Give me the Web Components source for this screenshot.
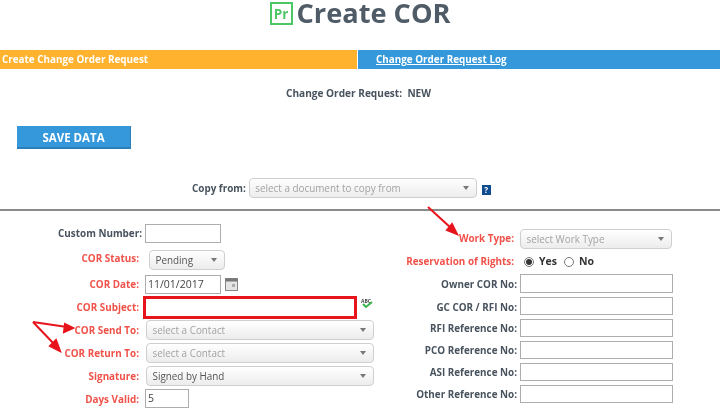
<!DOCTYPE html>
<html>
<head>
<meta charset="utf-8">
<title>Create COR</title>
<style>
  html, body { margin: 0; padding: 0; background: #fff; }
  body { width: 720px; height: 413px; overflow: hidden; position: relative; font-family: 'Open Sans', sans-serif; }
</style>
</head>
<body>
<cor-page></cor-page>

<script>
class CorTitle extends HTMLElement {
  constructor () {
    super()
    this.attachShadow({ mode: 'open' }).innerHTML = /* html */`
      <style>
      :host { display: flex; justify-content: center; align-items: flex-start; height: 50px; gap: 4px; color: #4f5b66; }
      .logo { width: 19px; height: 19px; margin-top: 2px; border: 2px solid #4cc764; color: #4cc764; font: 700 13.5px 'Open Sans', sans-serif; display: flex; align-items: center; justify-content: center; background: #fff; }
      h1 { margin: -1px 0 0; font: 700 27.2px/28px 'Open Sans', sans-serif; }
      </style>
      <span class="logo">Pr</span>
      <h1><slot></slot></h1>
    `
  }
}

class CorTabs extends HTMLElement {
  constructor () {
    super()
    this.attachShadow({ mode: 'open' }).innerHTML = /* html */`
      <style>
      :host { display: flex; height: 19px; gap: 1px; font: 700 9.9px/19px 'Open Sans', sans-serif; color: #fff; }
      .on { width: 357px; background: #ffb22e; padding-left: 2px; box-sizing: border-box; }
      .off { flex: 1; background: #3498db; padding-left: 18px; text-decoration: underline; }
      </style>
      <div class="on">Create Change Order Request</div>
      <div class="off">Change Order Request Log</div>
    `
  }
}

class CorInput extends HTMLElement {
  constructor () {
    super()
    this.attachShadow({ mode: 'open' }).innerHTML = /* html */`
      <style>
      :host { display: block; box-sizing: border-box; height: 19px; border: 1.5px solid #adadad; background: #fff; padding-left: 2px; font: 400 10.5px/16px 'Open Sans', sans-serif; color: #444; }
      :host([hot]) { height: 23px; border: 3px solid #e8141c; }
      </style>
      <slot></slot>
    `
  }
}

class CorSelect extends HTMLElement {
  constructor () {
    super()
    this.attachShadow({ mode: 'open' }).innerHTML = /* html */`
      <style>
      :host { display: flex; align-items: center; justify-content: space-between; box-sizing: border-box; height: 20px; padding: 0 7px 0 5.5px; border: 1.5px solid #cfcfcf; border-radius: 4px; background: linear-gradient(#fff, #ececec); font: 400 9.9px 'Open Sans', sans-serif; color: #a3a3a3; }
      :host([value]) { color: #555; }
      i { width: 0; height: 0; border: 3px solid transparent; border-top: 4px solid #777; border-bottom: 0; }
      </style>
      <span><slot></slot></span><i></i>
    `
  }
}

class CorField extends HTMLElement {
  constructor () {
    super()
    this.attachShadow({ mode: 'open' }).innerHTML = /* html */`
      <style>
      :host { display: flex; align-items: flex-start; height: var(--h, 23px); gap: var(--gap, 6px); }
      label { width: var(--label, 139px); flex: none; text-align: right; font: 700 9.9px/var(--lh, 19px) 'Open Sans', sans-serif; color: #48535e; white-space: nowrap; }
      :host([req]) label { color: #f0524a; }
      .ctl { display: flex; align-items: center; gap: var(--ctl-gap, 4px); }
      </style>
      <label></label>
      <div class="ctl"><slot></slot></div>
    `
  }

  connectedCallback () {
    this.shadowRoot.querySelector('label').textContent = this.getAttribute('label')
  }
}

class CorPage extends HTMLElement {
  constructor () {
    super()
    this.attachShadow({ mode: 'open' }).innerHTML = /* html */`
      <style>
      :host { display: block; position: relative; width: 720px; height: 413px; overflow: hidden; filter: blur(0.4px); font-family: 'Open Sans', sans-serif; }
      .status { width: 717px; text-align: center; font: 700 10.1px/16px 'Open Sans', sans-serif; color: #48535e; margin: 16px 0 25px; white-space: pre; }
      .save { display: block; margin-left: 17px; width: 114px; height: 23px; box-sizing: border-box; border: 0; border-bottom: 2px solid #2b7fb8; border-right: 1px solid #2b7fb8; background: #3498db; color: #fff; font: 700 11.5px 'Open Sans', sans-serif; padding: 2px 0 0; }
      .copy { display: flex; align-items: center; height: 19px; margin: 29px 0 12px 192px; gap: 3px; font: 700 9.9px 'Open Sans', sans-serif; color: #48535e; }
      .help { width: 9px; height: 10px; margin: 4px 0 0 2px; background: #0f4c8f; color: #fff; font: 700 8px/10px 'Open Sans', sans-serif; text-align: center; }
      hr { margin: 0; border: 0; height: 2px; background: #8a8a8a; }
      .form { display: flex; padding-top: 13px; }
      .left { width: 406px; flex: none; }
      .right { --label: 111px; --gap: 3px; padding-top: 5px; }
      .yes { display: flex; align-items: center; font: 700 10.5px/17px 'Open Sans', sans-serif; color: #333; }
      .radio { width: 8px; height: 8px; border: 1px solid #777; border-radius: 50%; margin: 0 5px 0 4px; background: #fff; display: flex; align-items: center; justify-content: center; }
      .radio.on::after { content: ''; width: 6px; height: 6px; background: #333; border-radius: 50%; }
      svg.marks { position: absolute; left: 0; top: 0; pointer-events: none; }
      .abc { font: 700 5px/6px 'Open Sans', sans-serif; color: #444; position: relative; width: 13px; height: 12px; margin-top: -7px; }
      .abc svg { position: absolute; left: 1px; top: 3px; }
      </style>

      <cor-title>Create COR</cor-title>
      <cor-tabs></cor-tabs>
      <div class="status">Change Order Request:  NEW</div>
      <button class="save">SAVE DATA</button>
      <div class="copy">
        <span>Copy from:</span>
        <cor-select style="width:228px">select a document to copy from</cor-select>
        <span class="help">?</span>
      </div>
      <hr>
      <div class="form">
        <div class="left">
          <cor-field label="Custom Number:" style="--h:26px;--label:142px;--gap:3px"><cor-input style="width:76px"></cor-input></cor-field>
          <cor-field req label="COR Status:" style="--h:25px;--lh:16px"><cor-select value style="width:76px;margin-left:4px">Pending</cor-select></cor-field>
          <cor-field req label="COR Date:" style="--h:21px">
            <cor-input style="width:76px">11/01/2017</cor-input>
            <svg width="13" height="13" viewBox="0 0 13 13"><rect x=".5" y=".5" width="12" height="12" fill="#e4e4e4" stroke="#888"/><rect x=".5" y=".5" width="12" height="3" fill="#777"/><rect x="7" y="6" width="3" height="3" fill="#aaa"/></svg>
          </cor-field>
          <cor-field req label="COR Subject:" style="--h:24px;--gap:4px;--lh:23px">
            <cor-input hot style="width:214px"></cor-input>
            <div class="abc">ABC<svg width="12" height="9" viewBox="0 0 12 9"><path d="M1 3l3 3 6-5" fill="none" stroke="#37b34a" stroke-width="2"/></svg></div>
          </cor-field>
          <cor-field req label="COR Send To:" style="--gap:7px;--lh:20px"><cor-select style="width:228px">select a Contact</cor-select></cor-field>
          <cor-field req label="COR Return To:" style="--gap:7px;--lh:20px"><cor-select style="width:228px">select a Contact</cor-select></cor-field>
          <cor-field req label="Signature:" style="--gap:7px;--lh:20px"><cor-select value style="width:228px">Signed by Hand</cor-select></cor-field>
          <cor-field req label="Days Valid:" style="--lh:20px"><cor-input style="width:44px">5</cor-input></cor-field>
        </div>
        <div class="right">
          <cor-field req label="Work Type:" style="--h:24px;--gap:6px;--label:108px"><cor-select style="width:152px">select Work Type</cor-select></cor-field>
          <cor-field req label="Reservation of Rights:" style="--h:21px;--gap:6px;--label:108px;--lh:17px">
            <span class="yes"><span class="radio on"></span>Yes<span class="radio" style="margin-left:7px"></span>No</span>
          </cor-field>
          <cor-field label="Owner COR No:" style="--h:23px;--lh:21px"><cor-input style="width:153px"></cor-input></cor-field>
          <cor-field label="GC COR / RFI No:" style="--h:22px;--lh:20px"><cor-input style="width:153px;height:18px"></cor-input></cor-field>
          <cor-field label="RFI Reference No:" style="--h:22px;--lh:18px"><cor-input style="width:153px;height:18px"></cor-input></cor-field>
          <cor-field label="PCO Reference No:" style="--h:22px;--lh:18px"><cor-input style="width:153px;height:18px"></cor-input></cor-field>
          <cor-field label="ASI Reference No:" style="--h:22px;--lh:18px"><cor-input style="width:153px;height:18px"></cor-input></cor-field>
          <cor-field label="Other Reference No:" style="--h:22px;--lh:18px"><cor-input style="width:153px;height:18px"></cor-input></cor-field>
        </div>
      </div>

      <svg class="marks" width="720" height="413" viewBox="0 0 720 413">
        <g stroke="#e8141c" stroke-width="2" fill="#e8141c">
          <path d="M428 207L451 228"/><path d="M457 234L447 230L452 224Z"/>
          <path d="M33 322L67 327"/><path d="M73 328L64 332L65 324Z"/>
          <path d="M33 322L55 345"/><path d="M60 351L50 346L56 340Z"/>
        </g>
      </svg>
    `
  }
}

customElements.define('cor-title', CorTitle)
customElements.define('cor-tabs', CorTabs)
customElements.define('cor-input', CorInput)
customElements.define('cor-select', CorSelect)
customElements.define('cor-field', CorField)
customElements.define('cor-page', CorPage)
</script>
</body>
</html>
